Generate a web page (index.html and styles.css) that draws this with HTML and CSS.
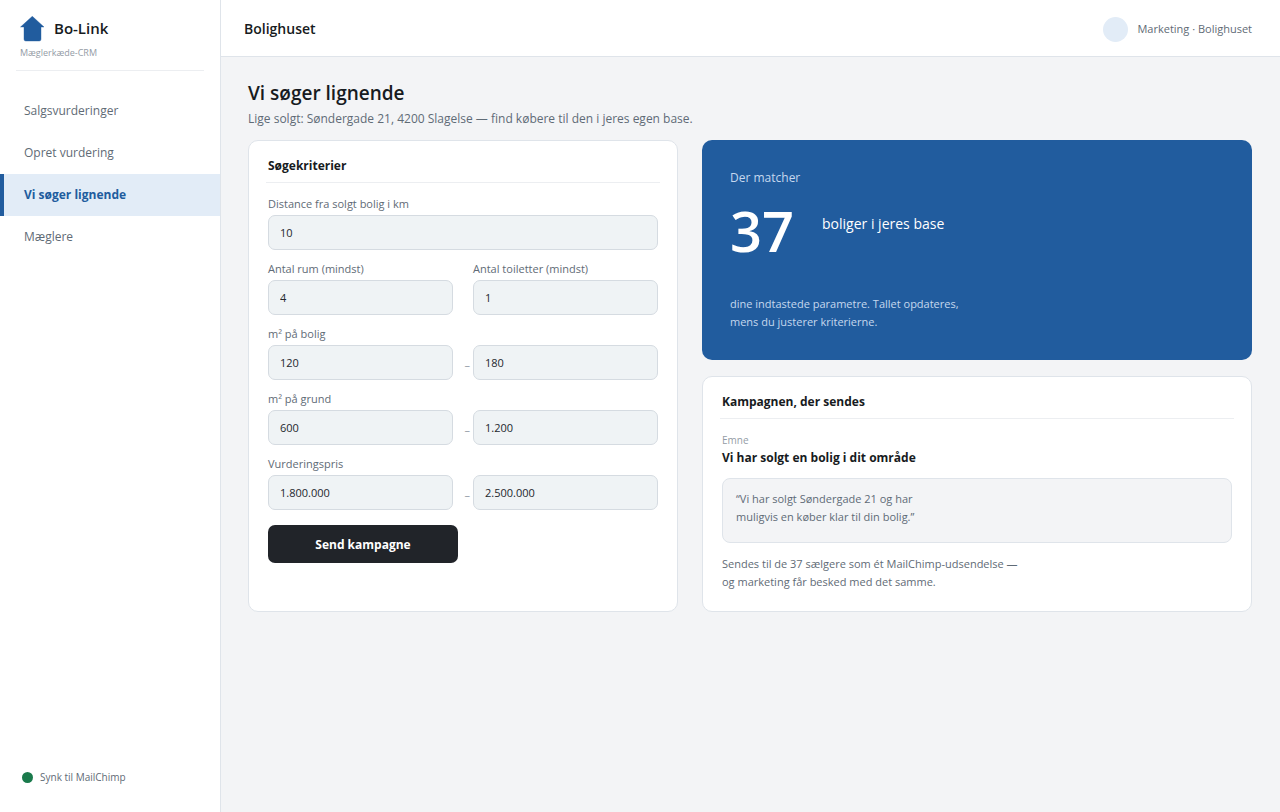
FILE: index.html
```html
<!DOCTYPE html>
<html lang="da">
<head>
    <meta charset="UTF-8">
    <meta name="viewport" content="width=device-width, initial-scale=1.0">
    <title>Bo-Link</title>
    <link rel="stylesheet" href="styles.css">
</head>
<body>

<div class="app">
    <aside class="sidebar">
        <div class="brand">
            <div class="brand-row">
                <svg class="brand-icon" viewBox="0 0 25 26" aria-hidden="true">
                    <path d="M12.3 0.3 L24 11 H21 V23.3 Q21 25 19.3 25 H5.7 Q4 25 4 23.3 V11 H0.5 Z" fill="#215c9e" stroke="#215c9e" stroke-width="0.4" stroke-linejoin="round"/>
                </svg>
                <span class="brand-name">Bo-Link</span>
            </div>
            <div class="brand-sub">Mæglerkæde-CRM</div>
        </div>
        <nav class="menu">
            <a href="#" class="menu-item">Salgsvurderinger</a>
            <a href="#" class="menu-item">Opret vurdering</a>
            <a href="#" class="menu-item active">Vi søger lignende</a>
            <a href="#" class="menu-item">Mæglere</a>
        </nav>
        <div class="sync"><span class="sync-dot"></span>Synk til MailChimp</div>
    </aside>

    <div class="content">
        <header class="topbar">
            <div class="topbar-title">Bolighuset</div>
            <div class="user"><span class="avatar"></span>Marketing · Bolighuset</div>
        </header>

        <main class="page">
            <h1>Vi søger lignende</h1>
            <p class="lead">Lige solgt: Søndergade 21, 4200 Slagelse — find købere til den i jeres egen base.</p>

            <div class="columns">
                <form class="card">
                    <h2>Søgekriterier</h2>
                    <div class="field">
                        <label for="distance">Distance fra solgt bolig i km</label>
                        <input type="text" id="distance" value="10">
                    </div>
                    <div class="pair">
                        <div class="field">
                            <label for="rooms">Antal rum (mindst)</label>
                            <input type="text" id="rooms" value="4">
                        </div>
                        <span></span>
                        <div class="field">
                            <label for="toilets">Antal toiletter (mindst)</label>
                            <input type="text" id="toilets" value="1">
                        </div>
                    </div>
                    <div class="pair">
                        <div class="field">
                            <label for="area-min">m² på bolig</label>
                            <input type="text" id="area-min" value="120">
                        </div>
                        <span class="dash">–</span>
                        <input type="text" value="180" aria-label="m² på bolig, maks.">
                    </div>
                    <div class="pair">
                        <div class="field">
                            <label for="plot-min">m² på grund</label>
                            <input type="text" id="plot-min" value="600">
                        </div>
                        <span class="dash">–</span>
                        <input type="text" value="1.200" aria-label="m² på grund, maks.">
                    </div>
                    <div class="pair">
                        <div class="field">
                            <label for="price-min">Vurderingspris</label>
                            <input type="text" id="price-min" value="1.800.000">
                        </div>
                        <span class="dash">–</span>
                        <input type="text" value="2.500.000" aria-label="Vurderingspris, maks.">
                    </div>
                    <button type="button" class="send-btn">Send kampagne</button>
                </form>

                <div class="right">
                    <section class="match">
                        <div class="match-label">Der matcher</div>
                        <div class="match-row">
                            <span class="match-number">37</span>
                            <span class="match-unit">boliger i jeres base</span>
                        </div>
                        <p class="match-note">dine indtastede parametre. Tallet opdateres,<br>mens du justerer kriterierne.</p>
                    </section>

                    <section class="card">
                        <h2>Kampagnen, der sendes</h2>
                        <div class="subject-label">Emne</div>
                        <div class="subject">Vi har solgt en bolig i dit område</div>
                        <blockquote class="quote">“Vi har solgt Søndergade 21 og har<br>muligvis en køber klar til din bolig.”</blockquote>
                        <p class="note">Sendes til de 37 sælgere som ét MailChimp-udsendelse —<br>og marketing får besked med det samme.</p>
                    </section>
                </div>
            </div>
        </main>
    </div>
</div>

</body>
</html>
```
FILE: styles.css
```css
* {
    box-sizing: border-box;
}

body {
    margin: 0;
    font-family: "Segoe UI", "Open Sans", "Noto Sans", sans-serif;
    font-size: 12px;
    line-height: 18px;
    color: #5f6b76;
    background-color: #f3f4f6;
}

h1, h2, p, blockquote {
    margin: 0;
}

.app {
    display: flex;
    min-height: 100vh;
}

/* Sidebar */
.sidebar {
    display: flex;
    flex-direction: column;
    flex: none;
    width: 221px;
    background-color: #fff;
    border-right: 1px solid #dfe4ea;
}

.brand {
    margin: 0 16px;
    padding: 14px 4px 7px;
    border-bottom: 1px solid #eceef1;
}

.brand-row {
    display: flex;
    align-items: center;
    gap: 9px;
}

.brand-icon {
    width: 25px;
    height: 26px;
}

.brand-name {
    font-size: 15px;
    line-height: 29px;
    font-weight: 600;
    color: #171b21;
}

.brand-sub {
    font-size: 9px;
    line-height: 20px;
    color: #949ca6;
}

.menu {
    margin-top: 19px;
}

.menu-item {
    display: block;
    padding: 12px 20px;
    border-left: 4px solid transparent;
    color: #5f6b76;
    text-decoration: none;
}

.menu-item.active {
    background-color: #e2ecf7;
    border-left-color: #215c9e;
    color: #215c9e;
    font-weight: 700;
}

.sync {
    display: flex;
    align-items: center;
    gap: 7px;
    margin-top: auto;
    padding: 0 22px 26px;
    font-size: 10px;
}

.sync-dot {
    width: 11px;
    height: 11px;
    border-radius: 50%;
    background-color: #1a7a4c;
}

/* Top bar */
.content {
    flex: 1;
    min-width: 0;
}

.topbar {
    display: flex;
    justify-content: space-between;
    align-items: center;
    height: 57px;
    padding: 2px 28px 0 23px;
    background-color: #fff;
    border-bottom: 1px solid #dfe4ea;
}

.topbar-title {
    font-size: 14px;
    font-weight: 600;
    color: #171b21;
}

.user {
    display: flex;
    align-items: center;
    gap: 9px;
    font-size: 11px;
}

.avatar {
    width: 25px;
    height: 25px;
    border-radius: 50%;
    background-color: #e2ecf7;
}

/* Page */
.page {
    padding: 22px 28px 28px 27px;
}

h1 {
    font-size: 19px;
    line-height: 28px;
    font-weight: 600;
    color: #171b21;
}

.lead {
    padding: 3px 0 12px;
}

.columns {
    display: grid;
    grid-template-columns: 43fr 55fr;
    gap: 24px;
}

.card {
    padding: 16px 19px 20px;
    background-color: #fff;
    border: 1px solid #dfe4ea;
    border-radius: 10px;
}

h2 {
    margin: 0 -2px 12px;
    padding: 0 2px 7px;
    border-bottom: 1px solid #eceef1;
    font-size: 12px;
    line-height: 18px;
    font-weight: 700;
    color: #171b21;
}

.field label {
    display: block;
    font-size: 11px;
    line-height: 18px;
    padding-bottom: 2px;
}

input {
    width: 100%;
    height: 35px;
    padding: 0 11px;
    background-color: #eff3f5;
    border: 1px solid #d5dbe1;
    border-radius: 7px;
    font-family: inherit;
    font-size: 11px;
    color: #23272d;
}

.pair {
    display: grid;
    grid-template-columns: 1fr 20px 1fr;
    align-items: end;
    margin-top: 10px;
}

.dash {
    padding-right: 3px;
    font-size: 11px;
    line-height: 31px;
    text-align: right;
    color: #949ca6;
}

.send-btn {
    width: 190px;
    height: 38px;
    margin: 15px 0 28px;
    border: none;
    border-radius: 7px;
    background-color: #212429;
    font-family: inherit;
    font-size: 12px;
    font-weight: 700;
    color: #fff;
    cursor: pointer;
}

.right {
    display: flex;
    flex-direction: column;
    gap: 16px;
}

.right .card {
    flex: 1;
}

.match {
    padding: 29px 28px;
    border-radius: 10px;
    background-color: #215c9e;
    color: #c5d8ee;
}

.match-row {
    display: flex;
    gap: 28px;
    padding: 7px 0 29px;
}

.match-number {
    font-size: 56px;
    line-height: 72px;
    font-weight: 600;
    color: #fff;
}

.match-unit {
    font-size: 14px;
    line-height: 60px;
    color: #fff;
}

.match-note {
    font-size: 11px;
}

.subject-label {
    font-size: 10px;
    line-height: 18px;
    color: #949ca6;
}

.subject {
    font-weight: 700;
    color: #171b21;
}

.quote {
    margin: 11px 0 12px;
    padding: 11px 13px 16px;
    background-color: #f3f4f6;
    border: 1px solid #dfe4ea;
    border-radius: 8px;
    font-size: 11px;
}

.note {
    font-size: 11px;
}
```
